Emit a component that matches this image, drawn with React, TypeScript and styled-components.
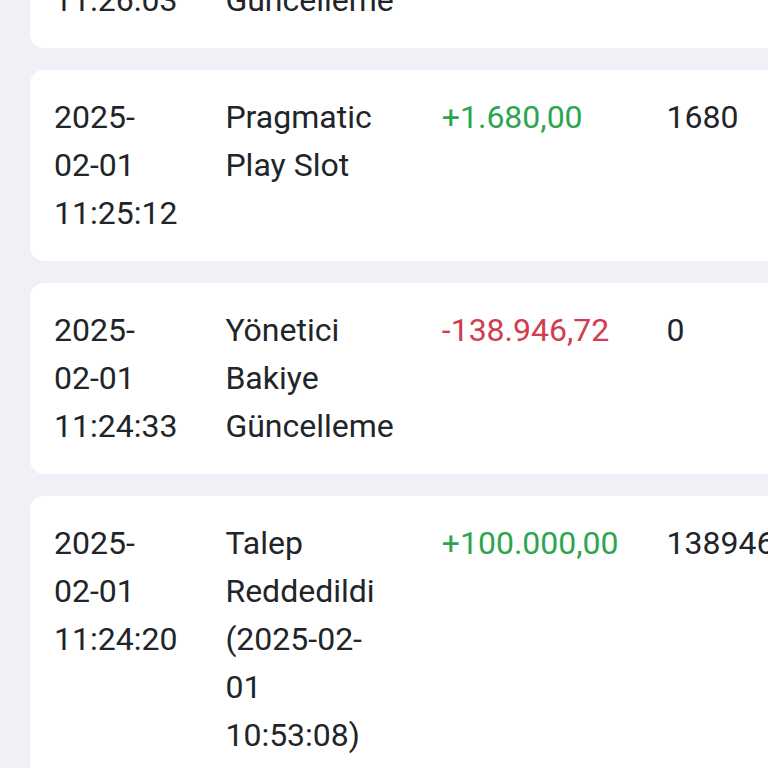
import React from "react";
import styled, { createGlobalStyle } from "styled-components";

const GlobalStyle = createGlobalStyle`
  html, body {
    margin: 0;
    padding: 0;
    background: #eff1f6;
    overflow: hidden;
  }
  body {
    font-family: Roboto, "Noto Sans", "Liberation Sans", sans-serif;
    color: #212529;
  }
`;

const Page = styled.div`
  width: 768px;
  height: 768px;
  overflow: hidden;
  padding-left: 30px;
  box-sizing: border-box;
`;

const Scroller = styled.div`
  margin-top: -165px;
`;

const Table = styled.table`
  width: min-content;
  border-collapse: separate;
  border-spacing: 0 22px;
  font-size: 32px;
  line-height: 48px;
`;

const Row = styled.tr``;

const Cell = styled.td<{ $tone?: "up" | "down" }>`
  background: #ffffff;
  vertical-align: top;
  padding: 23px 24px 24px 24px;
  color: ${(p) =>
    p.$tone === "up" ? "#2ea44f" : p.$tone === "down" ? "#d23c4e" : "#212529"};
  &:first-child {
    border-top-left-radius: 14px;
    border-bottom-left-radius: 14px;
  }
  &:last-child {
    border-top-right-radius: 14px;
    border-bottom-right-radius: 14px;
  }
`;

type Tx = {
  date: string;
  desc: string;
  amount: string;
  tone: "up" | "down";
  balance: string;
  status: string;
};

const rows: Tx[] = [
  {
    date: "2025-02-01 11:26:03",
    desc: "Yönetici Bakiye Güncelleme",
    amount: "-1.680,00",
    tone: "down",
    balance: "0",
    status: "Tamamlandı",
  },
  {
    date: "2025-02-01 11:25:12",
    desc: "Pragmatic Play Slot",
    amount: "+1.680,00",
    tone: "up",
    balance: "1680",
    status: "Tamamlandı",
  },
  {
    date: "2025-02-01 11:24:33",
    desc: "Yönetici Bakiye Güncelleme",
    amount: "-138.946,72",
    tone: "down",
    balance: "0",
    status: "Tamamlandı",
  },
  {
    date: "2025-02-01 11:24:20",
    desc: "Talep Reddedildi (2025-02-01 10:53:08)",
    amount: "+100.000,00",
    tone: "up",
    balance: "138946.72",
    status: "Tamamlandı",
  },
];

export default function App() {
  return (
    <>
      <GlobalStyle />
      <Page>
        <Scroller>
          <Table>
            <tbody>
              {rows.map((r, i) => (
                <Row key={i}>
                  <Cell>{r.date}</Cell>
                  <Cell>{r.desc}</Cell>
                  <Cell $tone={r.tone}>{r.amount}</Cell>
                  <Cell>{r.balance}</Cell>
                  <Cell>{r.status}</Cell>
                </Row>
              ))}
            </tbody>
          </Table>
        </Scroller>
      </Page>
    </>
  );
}
